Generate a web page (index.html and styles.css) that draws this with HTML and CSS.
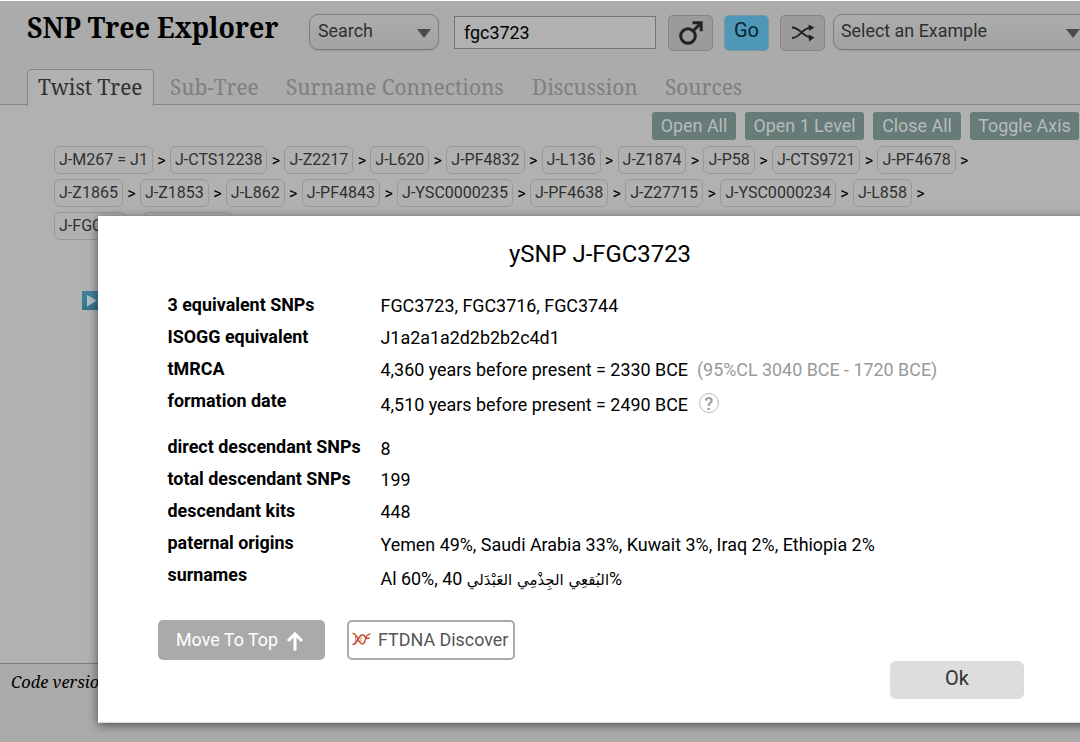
FILE: index.html
```html
<!DOCTYPE html>
<html lang="en">
<head>
<meta charset="utf-8">
<title>SNP Tree Explorer</title>
<link rel="stylesheet" href="styles.css">
</head>
<body>
<div class="page">
  <header class="header">
    <div class="toolbar">
      <h1 class="brand"><span>SNP Tree Explorer</span></h1>
      <div class="select select-mode"><span>Search</span><i class="caret"></i></div>
      <div class="query">fgc3723</div>
      <div class="btn btn-male"><svg width="26" height="26" viewBox="0 0 26 26" fill="none" stroke="#222" stroke-width="3"><circle cx="10" cy="16" r="7.3"/><path d="M15 11L22.5 3.5M14.5 2.8H23.2V11.2"/></svg></div>
      <div class="btn btn-go">Go</div>
      <div class="btn btn-shuffle"><svg width="24" height="18" viewBox="0 0 24 18" fill="none" stroke="#222" stroke-width="1.800"><path d="M1 3.500C9 3 12 14 21 13.500M1 14C10 14 10 3.500 21 3.500"/><path d="M17.500 .5L23.500 3.500L18 7ZM17.500 10.500L23.500 13.500L18 17.500Z" fill="#222" stroke="none"/></svg></div>
      <div class="select select-example"><span>Select an Example</span><i class="caret"></i></div>
    </div>
    <nav class="tabs">
      <div class="tab active"><span>Twist Tree</span></div>
      <div class="tab tab-sub"><span>Sub-Tree</span></div>
      <div class="tab tab-surname"><span>Surname Connections</span></div>
      <div class="tab tab-discussion"><span>Discussion</span></div>
      <div class="tab tab-sources"><span>Sources</span></div>
    </nav>
  </header>
  <main class="main">
    <div class="actions">
      <div class="action w84">Open All</div>
      <div class="action w119">Open 1 Level</div>
      <div class="action w88">Close All</div>
      <div class="action w109">Toggle Axis</div>
    </div>
    <div class="path">
      <div class="row"><b>J-M267 = J1</b><i>&gt;</i><b>J-CTS12238</b><i>&gt;</i><b>J-Z2217</b><i>&gt;</i><b>J-L620</b><i>&gt;</i><b>J-PF4832</b><i>&gt;</i><b>J-L136</b><i>&gt;</i><b>J-Z1874</b><i>&gt;</i><b>J-P58</b><i>&gt;</i><b>J-CTS9721</b><i>&gt;</i><b>J-PF4678</b><i>&gt;</i></div>
      <div class="row"><b>J-Z1865</b><i>&gt;</i><b>J-Z1853</b><i>&gt;</i><b>J-L862</b><i>&gt;</i><b>J-PF4843</b><i>&gt;</i><b>J-YSC0000235</b><i>&gt;</i><b>J-PF4638</b><i>&gt;</i><b>J-Z27715</b><i>&gt;</i><b>J-YSC0000234</b><i>&gt;</i><b>J-L858</b><i>&gt;</i></div>
      <div class="row"><b>J-FGC11</b><i>&gt;</i><b>J-FGC3723</b></div>
    </div>
    <div class="node"><svg width="20" height="19" viewBox="0 0 20 19"><defs><linearGradient id="sky" x1="0" y1="0" x2="0" y2="1"><stop offset="0" stop-color="#447f99"/><stop offset=".5" stop-color="#3c8099"/><stop offset="1" stop-color="#347087"/></linearGradient></defs><rect width="20" height="19" fill="url(#sky)"/><path d="M5 4L15 9.500L5 15.500Z" fill="#b2c0c6"/></svg></div>
  </main>
  <footer class="footer"><span>Code version</span></footer>
</div>
<section class="dialog">
  <h2 class="title">ySNP J-FGC3723</h2>
  <div class="facts">
    <div class="labels">
      <div>3 equivalent SNPs</div><div>ISOGG equivalent</div><div>tMRCA</div><div class="group-end">formation date</div>
      <div>direct descendant SNPs</div><div>total descendant SNPs</div><div>descendant kits</div><div>paternal origins</div><div>surnames</div>
    </div>
    <div class="values">
      <div>FGC3723, FGC3716, FGC3744</div>
      <div>J1a2a1a2d2b2b2c4d1</div>
      <div class="h-tall">4,360 years before present = 2330 BCE<span class="range">(95%CL 3040 BCE - 1720 BCE)</span></div>
      <div class="h-help">4,510 years before present = 2490 BCE<span class="help">?</span></div>
      <div class="h-short">8</div>
      <div>199</div>
      <div class="h-kits">448</div>
      <div class="h-origin">Yemen 49%, Saudi Arabia 33%, Kuwait 3%, Iraq 2%, Ethiopia 2%</div>
      <div class="names">Al 60%, 40 <span class="arabic" dir="rtl">البُقعِي الجِذْمِي العَبْدَلي</span>%</div>
    </div>
  </div>
  <div class="links">
    <div class="move">Move To Top<svg width="18" height="20" viewBox="0 0 18 20" fill="none" stroke="#fff" stroke-width="3"><path d="M9 19.500V3M2 10L9 2.800L16 10"/></svg></div>
    <div class="ftdna"><svg width="19" height="14" viewBox="0 0 19 14" fill="none" stroke="#d05a38" stroke-width="1.600"><path d="M.5 1.500C6 .5 5.500 12 10.500 12C15 12 11 2 18.500 2"/><path d="M.5 12.500C6 13 5.500 3 10.500 3C14.500 3 12 8 17.500 6" stroke="#b94b30"/><path d="M3.500 4V10M9 5V10" stroke-width=".8"/></svg><span>FTDNA Discover</span></div>
  </div>
  <div class="ok">Ok</div>
</section>
</body>
</html>
```
FILE: styles.css
```css
* { box-sizing: border-box; }
body { margin: 0; width: 1080px; height: 742px; overflow: hidden; position: relative; font-family: Roboto, sans-serif; background: #b1b1b1; color: #000; }
.page { height: 742px; display: flex; flex-direction: column; border-top: 1px solid #fff; }
.header { height: 104px; background: #ababab; border-bottom: 1px solid #868686; flex: none; }
.toolbar { display: flex; height: 68px; padding-left: 27px; align-items: flex-start; width: 1110px; }
.brand { margin: 6px 0 0; width: 282px; font: bold 28px/40px "Noto Serif", "DejaVu Serif Condensed", serif; white-space: nowrap; }
.brand span, .tab span { display: inline-block; transform-origin: left center; transform: scaleX(.947); }
.brand span { transform: scaleX(.958); }
.select { margin-top: 13px; height: 36px; border: 1px solid #7d7d7d; border-radius: 9px; background: linear-gradient(#adadad, #a2a2a2); display: flex; justify-content: space-between; padding: 0 7px 0 8px; font-size: 17.9px; line-height: 32px; color: #303030; box-shadow: 0 1px 1px #999; flex: none; }
.select-mode { width: 130px; }
.select-example { width: 260px; margin-left: 8px; padding: 0 12px 0 7px; }
.caret { width: 0; height: 0; border: 7px solid transparent; border-top: 9px solid #4b4b4b; border-bottom: 0; margin-top: 14px; }
.query { width: 202px; height: 33px; margin: 15px 0 0 15px; border: 1px solid #757575; background: #b1b1b1; font-size: 17.9px; line-height: 31px; padding-left: 9px; flex: none; }
.btn { width: 45px; height: 36px; margin: 14px 0 0 11px; background: #9b9b9b; border: 1px solid #858585; border-radius: 5px; display: flex; justify-content: center; align-items: center; flex: none; }
.btn-male { margin-left: 12px; }
.btn-go { background: #4f97b7; border-color: #7796a2; font-size: 20px; color: #08242e; padding-bottom: 6px; }
.tabs { display: flex; height: 36px; font: 22px/34px "Noto Serif", "DejaVu Serif Condensed", serif; color: #7f7f7f; padding-left: 27px; white-space: nowrap; }
.active { width: 127px; height: 37px; background: #b1b1b1; border: 1px solid #868686; border-bottom: 0; border-radius: 5px 5px 0 0; padding-left: 10px; line-height: 32px; color: #303030; flex: none; }
.tab-sub { width: 116px; padding-left: 16px; }
.tab-surname { width: 246px; padding-left: 16px; }
.tab-discussion { width: 133px; padding-left: 16px; }
.tab-sources { padding-left: 16px; }
.main { height: 558px; flex: none; }
.actions { display: flex; justify-content: flex-end; gap: 9px; margin: 7px 1px 0 0; }
.action { height: 28px; background: #677b79; color: #b6bcbc; border-radius: 3px; text-align: center; font-size: 17.9px; line-height: 28px; white-space: nowrap; }
.w84 { width: 84px; } .w119 { width: 119px; } .w88 { width: 88px; } .w109 { width: 109px; }
.path { margin: 6px 0 0 54px; display: grid; gap: 5px; }
.row { display: flex; height: 28px; align-items: center; white-space: nowrap; }
.row b { font-weight: 400; font-size: 16.05px; line-height: 26px; height: 28px; border: 1px solid #999; border-radius: 6px; padding: 0 4px; color: #303030; }
.row i { font-style: normal; font-size: 16px; width: 17px; text-align: center; }
.node { margin: 51px 0 0 82px; height: 19px; line-height: 0; }
.footer { flex: 1; background: #ababab; border-top: 1px solid #7c7c7c; padding: 5px 0 0 11px; font: italic 17px/26px "Noto Serif", "DejaVu Serif Condensed", serif; }
.footer span { display: inline-block; transform: scaleX(.965); transform-origin: left center; }
.dialog { position: absolute; left: 98px; top: 216px; width: 1004px; height: 507px; background: #fff; border-bottom: 1px solid #ddd; box-shadow: 0 2px 10px rgba(0,0,0,.55); }
.title { margin: 22px 0 0; text-align: center; font-weight: 400; font-size: 23.9px; line-height: 32px; }
.facts { display: flex; margin: 19px 0 0 69.5px; font-size: 17.9px; line-height: 32px; white-space: nowrap; }
.labels { width: 213px; font-weight: 700; }
.labels div, .values div { height: 32px; }
.labels .group-end { height: 46px; }
.values { padding-top: 1px; }
.values .h-tall { height: 35px; }
.values .h-help { height: 44px; display: flex; }
.values .h-short { height: 31px; }
.values .h-kits { height: 33px; }
.values .h-origin { height: 34px; }
.range { color: #999; margin-left: 9px; }
.help { width: 20px; height: 20px; margin: 4px 0 0 11px; border: 1px solid #bbb; border-radius: 50%; color: #999; text-align: center; line-height: 19px; font-size: 18px; font-weight: 500; }
.arabic { font-family: "DejaVu Sans", sans-serif; font-size: 15px; }
.links { display: flex; margin: 25px 0 0 60px; gap: 22px; height: 40px; font-size: 17.9px; line-height: 37px; white-space: nowrap; }
.move { width: 167px; background: #aaa; color: #fff; border-radius: 5px; display: flex; align-items: center; justify-content: center; gap: 8px; padding: 0 3px 2px 0; }
.move svg { margin-top: 3px; }
.ftdna { width: 168px; border: 2px solid #aaa; border-radius: 5px; color: #555; display: flex; align-items: center; padding: 0 0 2px 3px; gap: 7px; }
.ok { width: 134px; height: 38px; margin: 1px 0 0 792px; background: #ddd; border-radius: 6px; text-align: center; font-size: 20px; line-height: 35px; color: #333; }
```
